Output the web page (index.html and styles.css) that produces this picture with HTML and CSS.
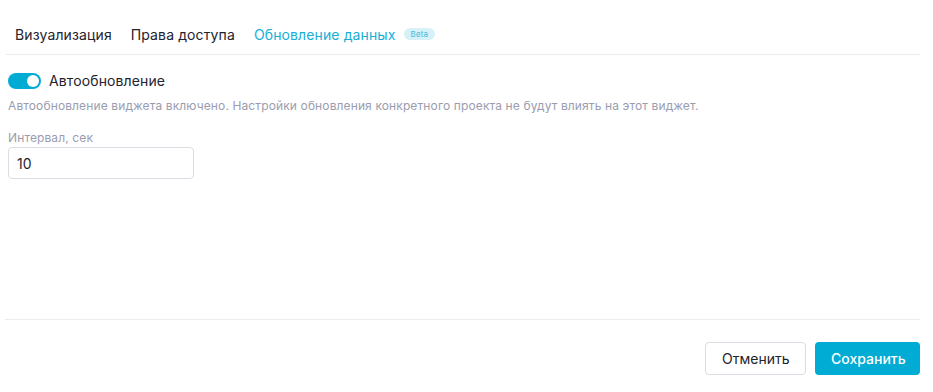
FILE: index.html
```html
<!DOCTYPE html>
<html lang="ru">

<head>
    <meta charset="UTF-8">
    <title>Настройки виджета</title>
    <link rel="stylesheet" href="styles.css">
</head>

<body>

    <div class="widget-settings">
        <div class="tabs">
            <div class="tab">Визуализация</div>
            <div class="tab">Права доступа</div>
            <div class="tab tab-active">Обновление данных <span class="badge">Beta</span></div>
        </div>

        <div class="content">
            <div class="switch-row">
                <span class="switch"><span class="switch-knob"></span></span>
                <span class="switch-label">Автообновление</span>
            </div>
            <div class="hint">Автообновление виджета включено. Настройки обновления конкретного проекта не будут влиять на этот виджет.</div>

            <div class="field">
                <label for="interval">Интервал, сек</label>
                <input type="text" id="interval" value="10">
            </div>
        </div>

        <div class="footer">
            <button class="btn-secondary">Отменить</button>
            <button class="btn-primary">Сохранить</button>
        </div>
    </div>

</body>

</html>
```

FILE: styles.css
```css
body {
    font-family: Inter, "Noto Sans", sans-serif;
    margin: 0;
    color: #23232d;
    background: #fff;
    letter-spacing: 0.12px;
}

.widget-settings {
    width: 915px;
    height: 392px;
    display: flex;
    flex-direction: column;
    padding-left: 5px;
}

.tabs {
    display: flex;
    align-items: center;
    gap: 19px;
    height: 55px;
    padding-left: 9px;
    margin-left: 1px;
    border-bottom: 1px solid #ececef;
    box-sizing: border-box;
    font-size: 14px;
    padding-top: 14px;
}

.tab {
    color: #23232d;
}

.tab-active {
    color: #17afd5;
    display: flex;
    align-items: center;
}

.badge {
    display: inline-block;
    margin-left: 8px;
    padding: 0 7px;
    height: 12px;
    line-height: 12px;
    font-size: 8px;
    border-radius: 6px;
    background: #d6f1f8;
    color: #4bbad9;
}

.content {
    flex: 1;
    padding: 17px 3px 0;
}

.switch-row {
    display: flex;
    align-items: center;
    gap: 8px;
    font-size: 14px;
}

.switch {
    width: 33px;
    height: 16px;
    border-radius: 8px;
    background: #00acd4;
    position: relative;
}

.switch-knob {
    position: absolute;
    right: 2px;
    top: 2px;
    width: 12px;
    height: 12px;
    border-radius: 50%;
    background: #fff;
}

.hint {
    margin-top: 9px;
    font-size: 12px;
    color: #9a9db0;
}

.field {
    margin-top: 17px;
}

.field label {
    display: block;
    font-size: 12px;
    color: #9a9db0;
    margin-bottom: 2px;
}

.field input {
    width: 186px;
    height: 32px;
    box-sizing: border-box;
    border: 1px solid #dcdde4;
    border-radius: 4px;
    padding: 0 8px;
    font-family: inherit;
    font-size: 14px;
    color: #23232d;
}

.footer {
    border-top: 1px solid #ececef;
    display: flex;
    justify-content: flex-end;
    gap: 9px;
    padding: 22px 0 17px;
}

button {
    height: 33px;
    padding: 0 16px;
    font-family: inherit;
    font-size: 14px;
    border-radius: 4px;
    cursor: pointer;
}

.btn-secondary {
    width: 101px;
    background: #fff;
    border: 1px solid #dcdde4;
    color: #23232d;
}

.btn-primary {
    width: 105px;
    background: #00acd4;
    border: none;
    color: #fff;
    font-weight: 500;
}
```
